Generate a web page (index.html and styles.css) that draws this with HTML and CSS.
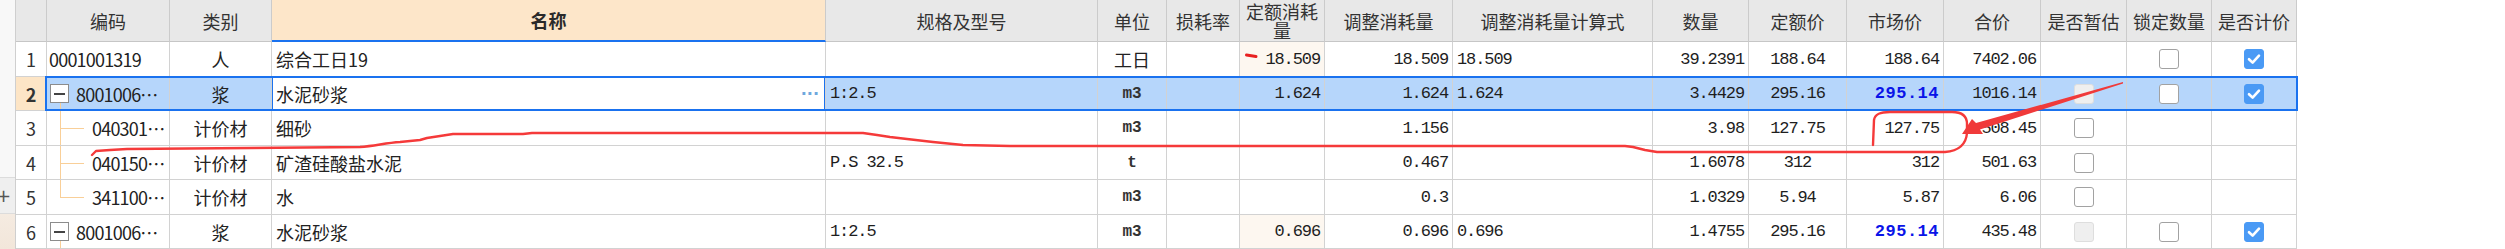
FILE: index.html
```html
<!DOCTYPE html>
<html lang="zh-CN">
<head>
<meta charset="utf-8">
<title>材料明细</title>
<link rel="stylesheet" href="styles.css">
</head>
<body>
<div class="screen">
  <div class="side">
    <div class="side-top"></div>
    <div class="side-tab"><span class="plus">+</span></div>
    <div class="side-bottom"></div>
  </div>

  <div class="grid">
    <div class="row head">
      <div class="cell"></div>
      <div class="cell">编码</div>
      <div class="cell">类别</div>
      <div class="cell name-h">名称</div>
      <div class="cell">规格及型号</div>
      <div class="cell">单位</div>
      <div class="cell">损耗率</div>
      <div class="cell two">定额消耗量</div>
      <div class="cell">调整消耗量</div>
      <div class="cell">调整消耗量计算式</div>
      <div class="cell">数量</div>
      <div class="cell">定额价</div>
      <div class="cell">市场价</div>
      <div class="cell">合价</div>
      <div class="cell">是否暂估</div>
      <div class="cell">锁定数量</div>
      <div class="cell">是否计价</div>
    </div>

    <div class="row h35">
      <div class="cell c idx">1</div>
      <div class="cell l code plain">0001001319</div>
      <div class="cell c">人</div>
      <div class="cell l">综合工日19</div>
      <div class="cell l"></div>
      <div class="cell c">工日</div>
      <div class="cell"></div>
      <div class="cell r num cream">18.509</div>
      <div class="cell r num">18.509</div>
      <div class="cell l num">18.509</div>
      <div class="cell r num">39.2391</div>
      <div class="cell c num">188.64</div>
      <div class="cell r num">188.64</div>
      <div class="cell r num">7402.06</div>
      <div class="cell c"></div>
      <div class="cell c"><span class="cb"></span></div>
      <div class="cell c"><span class="cb on"><svg viewBox="0 0 20 20"><path d="M5 10.2 L8.6 13.6 L15 6.6"/></svg></span></div>
    </div>

    <div class="row h34 sel">
      <div class="cell c idx cur">2</div>
      <div class="cell l code tree-top"><span class="toggle"></span><span class="code-txt">8001006…</span></div>
      <div class="cell c">浆</div>
      <div class="cell l edit"><span>水泥砂浆</span><span class="more">···</span></div>
      <div class="cell l num">1:2.5</div>
      <div class="cell c num unit">m3</div>
      <div class="cell"></div>
      <div class="cell r num">1.624</div>
      <div class="cell r num">1.624</div>
      <div class="cell l num">1.624</div>
      <div class="cell r num">3.4429</div>
      <div class="cell c num">295.16</div>
      <div class="cell r num strong">295.14</div>
      <div class="cell r num">1016.14</div>
      <div class="cell c"><span class="cb dis"></span></div>
      <div class="cell c"><span class="cb"></span></div>
      <div class="cell c"><span class="cb on"><svg viewBox="0 0 20 20"><path d="M5 10.2 L8.6 13.6 L15 6.6"/></svg></span></div>
    </div>

    <div class="row h35">
      <div class="cell c idx">3</div>
      <div class="cell l code"><span class="guide mid"></span><span class="code-txt">040301…</span></div>
      <div class="cell c">计价材</div>
      <div class="cell l">细砂</div>
      <div class="cell l"></div>
      <div class="cell c num unit">m3</div>
      <div class="cell"></div>
      <div class="cell r num"></div>
      <div class="cell r num">1.156</div>
      <div class="cell l num"></div>
      <div class="cell r num">3.98</div>
      <div class="cell c num">127.75</div>
      <div class="cell r num">127.75</div>
      <div class="cell r num">508.45</div>
      <div class="cell c"><span class="cb"></span></div>
      <div class="cell c"></div>
      <div class="cell c"></div>
    </div>

    <div class="row h34">
      <div class="cell c idx">4</div>
      <div class="cell l code"><span class="guide mid"></span><span class="code-txt">040150…</span></div>
      <div class="cell c">计价材</div>
      <div class="cell l">矿渣硅酸盐水泥</div>
      <div class="cell l num">P.S 32.5</div>
      <div class="cell c num unit">t</div>
      <div class="cell"></div>
      <div class="cell r num"></div>
      <div class="cell r num">0.467</div>
      <div class="cell l num"></div>
      <div class="cell r num">1.6078</div>
      <div class="cell c num">312</div>
      <div class="cell r num">312</div>
      <div class="cell r num">501.63</div>
      <div class="cell c"><span class="cb"></span></div>
      <div class="cell c"></div>
      <div class="cell c"></div>
    </div>

    <div class="row h35">
      <div class="cell c idx">5</div>
      <div class="cell l code"><span class="guide last"></span><span class="code-txt">341100…</span></div>
      <div class="cell c">计价材</div>
      <div class="cell l">水</div>
      <div class="cell l"></div>
      <div class="cell c num unit">m3</div>
      <div class="cell"></div>
      <div class="cell r num"></div>
      <div class="cell r num">0.3</div>
      <div class="cell l num"></div>
      <div class="cell r num">1.0329</div>
      <div class="cell c num">5.94</div>
      <div class="cell r num">5.87</div>
      <div class="cell r num">6.06</div>
      <div class="cell c"><span class="cb"></span></div>
      <div class="cell c"></div>
      <div class="cell c"></div>
    </div>

    <div class="row h34">
      <div class="cell c idx">6</div>
      <div class="cell l code tree-top"><span class="toggle"></span><span class="code-txt">8001006…</span></div>
      <div class="cell c">浆</div>
      <div class="cell l">水泥砂浆</div>
      <div class="cell l num">1:2.5</div>
      <div class="cell c num unit">m3</div>
      <div class="cell"></div>
      <div class="cell r num cream">0.696</div>
      <div class="cell r num">0.696</div>
      <div class="cell l num">0.696</div>
      <div class="cell r num">1.4755</div>
      <div class="cell c num">295.16</div>
      <div class="cell r num strong">295.14</div>
      <div class="cell r num">435.48</div>
      <div class="cell c"><span class="cb dis"></span></div>
      <div class="cell c"><span class="cb"></span></div>
      <div class="cell c"><span class="cb on"><svg viewBox="0 0 20 20"><path d="M5 10.2 L8.6 13.6 L15 6.6"/></svg></span></div>
    </div>
  </div>

  <div class="blank"></div>

  <svg class="marks" viewBox="0 0 2505 249" width="2505" height="249">
    <path class="pen" d="M92,155 L96,151 L110,150 L127,149 L250,148 L360,147 C375,146 385,143 400,142 L420,140 L427,138 L440,136 L453,134 L523,134 L532,133 L863,133 L877,135 L890,137 L907,139 L933,142 L963,145 L1010,146 L1625,146 L1633,147 L1645,150 L1657,152 L1945,152 C1958,151 1966,145 1967,133 L1967,124 C1967,116 1962,112 1952,112 L1890,112 C1880,112 1875,114 1874,120 L1873,145"/>
    <path class="dash" d="M1246.5,55 L1256,56.5"/>
    <polygon class="arrow" points="1962,134 1972,119 1976,123 2123,82 2123,83.5 1980,129.5 1983,134"/>
  </svg>
</div>
</body>
</html>
```

FILE: styles.css
```css
* { box-sizing: border-box; }

html, body {
  margin: 0;
  padding: 0;
  background: #ffffff;
}

body {
  font-family: "Noto Sans CJK SC", "Noto Sans", sans-serif;
  font-size: 18px;
  color: #222222;
}

.screen {
  position: relative;
  display: flex;
  width: 2505px;
  height: 249px;
  overflow: hidden;
}

/* left strip */
.side {
  flex: none;
  width: 15px;
  display: flex;
  flex-direction: column;
}
.side-top {
  height: 177px;
  background: #f8f8f8;
}
.side-tab {
  height: 37px;
  background: #efefef;
  border-top: 1px solid #dcdcdc;
  border-bottom: 1px solid #dcdcdc;
  display: flex;
  align-items: center;
  overflow: hidden;
}
.plus {
  margin-left: -4px;
  font-family: "DejaVu Sans", sans-serif;
  font-size: 18px;
  line-height: 1;
  color: #555555;
}
.side-bottom {
  flex: 1;
  background: linear-gradient(180deg, #f5ebe1, #f2e6da);
}

/* grid */
.grid {
  flex: none;
  width: 2282px;
  border-left: 1px solid #cfcfcf;
  display: flex;
  flex-direction: column;
}

.row {
  position: relative;
  display: grid;
  grid-template-columns: 31px 123px 102px 554px 272px 69px 73px 85px 128px 200px 96px 98px 97px 97px 86px 85px 85px;
}
.row.head { height: 42px; }
.row.h35 { height: 35px; }
.row.h34 { height: 34px; }

.cell {
  display: flex;
  align-items: center;
  padding: 0 4px;
  border-right: 1px solid #d2d2d2;
  border-bottom: 1px solid #d2d2d2;
  white-space: nowrap;
  overflow: hidden;
  min-width: 0;
}

.head .cell {
  background: #e8e8e8;
  color: #333333;
  justify-content: center;
  text-align: center;
  white-space: normal;
  line-height: 20px;
  padding: 0 3px;
  border-right-color: #cbcbcb;
  border-bottom-color: #c6c6c6;
}
.head .cell.two {
  overflow: visible;
  line-height: 19px;
  padding-top: 1px;
}
.head .cell.name-h {
  background: #fde6c9;
  font-weight: bold;
  color: #2a2a2a;
  border-bottom: 2px solid #1a72ef;
}

.l { justify-content: flex-start; }
.c { justify-content: center; }
.r { justify-content: flex-end; }

.idx { color: #333333; padding: 0; }
.idx.cur { background: #fde5c6; font-weight: bold; }

.num {
  font-family: "Liberation Mono", monospace;
  font-size: 17px;
  letter-spacing: -1.1px;
  color: #1e1e1e;
}
.r.num { padding-right: 4px; }
.num.unit { letter-spacing: 0; font-size: 16px; font-weight: bold; color: #333333; }
.num.strong {
  font-weight: bold;
  color: #0a14e8;
  letter-spacing: 0.5px;
  padding-right: 4px;
}

.cream { background: #fdf7f0; }

/* code column / tree */
.code { letter-spacing: -0.8px; padding-left: 3px; }
.code.plain { padding-left: 2px; }
.code-txt { margin-left: 7px; }
.toggle {
  flex: none;
  position: relative;
  width: 19px;
  height: 19px;
  border: 1px solid #8c8c8c;
  background: #ffffff;
  display: flex;
  align-items: center;
  justify-content: center;
}
.toggle::before {
  content: "";
  width: 11px;
  height: 2px;
  background: #444444;
}
.tree-top {
  background: linear-gradient(#f9cf98, #f9cf98) 13px 100% / 1px 8px no-repeat;
}
.guide {
  flex: none;
  align-self: stretch;
  width: 38px;
  margin-left: -3px;
  margin-bottom: -1px;
}
.guide.mid {
  background:
    linear-gradient(#f9cf98, #f9cf98) 13px 0 / 1px 100% no-repeat,
    linear-gradient(#f9cf98, #f9cf98) 13px 50% / 24px 1px no-repeat;
}
.guide.last {
  background:
    linear-gradient(#f9cf98, #f9cf98) 13px 0 / 1px 50% no-repeat,
    linear-gradient(#f9cf98, #f9cf98) 13px 50% / 24px 1px no-repeat;
}
.guide + .code-txt { margin-left: 7px; }

/* selected row */
.sel { background: #b6d6fb; }
.sel::after {
  content: "";
  position: absolute;
  left: 29px;
  top: -1px;
  right: -1px;
  bottom: 0;
  border: 2px solid #1a72ef;
  pointer-events: none;
}
.cell.edit {
  position: relative;
  background: #ffffff;
  justify-content: space-between;
  padding-right: 6px;
}
.cell.edit::after {
  content: "";
  position: absolute;
  left: -1px;
  top: -1px;
  right: -1px;
  bottom: -1px;
  border: 2px solid #1a72ef;
}
.more {
  font-family: "DejaVu Sans", sans-serif;
  font-weight: bold;
  font-size: 16px;
  letter-spacing: 0px;
  color: #6ea8dd;
}

/* checkboxes */
.cb {
  flex: none;
  width: 20px;
  height: 20px;
  border: 1.5px solid #a2a2a2;
  border-radius: 3px;
  background: #ffffff;
  display: flex;
  align-items: center;
  justify-content: center;
}
.cb.on {
  background: #4a9af5;
  border-color: #4a9af5;
}
.cb.dis {
  background: #efefef;
  border-color: #dedede;
}
.cb svg {
  width: 20px;
  height: 20px;
  flex: none;
}
.cb svg path {
  fill: none;
  stroke: #ffffff;
  stroke-width: 2.6;
  stroke-linecap: round;
  stroke-linejoin: round;
}

.blank {
  flex: 1;
  background: #ffffff;
}

/* hand-drawn annotation layer */
.marks {
  position: absolute;
  left: 0;
  top: 0;
  pointer-events: none;
}
.marks .pen {
  fill: none;
  stroke: #f53a3a;
  stroke-width: 2.4;
  stroke-linejoin: round;
  stroke-linecap: round;
}
.marks .dash {
  fill: none;
  stroke: #e82020;
  stroke-width: 3;
  stroke-linecap: round;
}
.marks .arrow {
  fill: #f03a3a;
}
```
